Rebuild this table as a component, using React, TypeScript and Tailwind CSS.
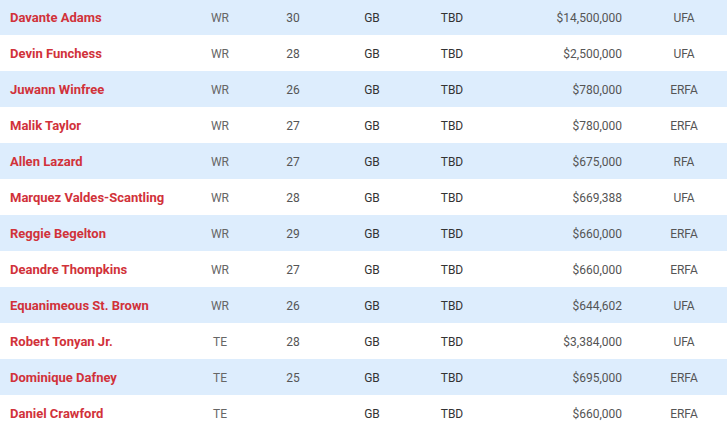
import React from "react";

const rows: [string, string, string, string, string, string, string][] = [
  ["Davante Adams", "WR", "30", "GB", "TBD", "$14,500,000", "UFA"],
  ["Devin Funchess", "WR", "28", "GB", "TBD", "$2,500,000", "UFA"],
  ["Juwann Winfree", "WR", "26", "GB", "TBD", "$780,000", "ERFA"],
  ["Malik Taylor", "WR", "27", "GB", "TBD", "$780,000", "ERFA"],
  ["Allen Lazard", "WR", "27", "GB", "TBD", "$675,000", "RFA"],
  ["Marquez Valdes-Scantling", "WR", "28", "GB", "TBD", "$669,388", "UFA"],
  ["Reggie Begelton", "WR", "29", "GB", "TBD", "$660,000", "ERFA"],
  ["Deandre Thompkins", "WR", "27", "GB", "TBD", "$660,000", "ERFA"],
  ["Equanimeous St. Brown", "WR", "26", "GB", "TBD", "$644,602", "UFA"],
  ["Robert Tonyan Jr.", "TE", "28", "GB", "TBD", "$3,384,000", "UFA"],
  ["Dominique Dafney", "TE", "25", "GB", "TBD", "$695,000", "ERFA"],
  ["Daniel Crawford", "TE", "", "GB", "TBD", "$660,000", "ERFA"],
];

export default function App() {
  return (
    <div
      className="w-[727px] h-[431px] overflow-hidden bg-white"
      style={{ fontFamily: "Roboto, 'Liberation Sans', sans-serif" }}
    >
      <div className="-mt-px">
        {rows.map((r, i) => (
          <div
            key={i}
            className={`grid grid-cols-[185px_70px_76px_82px_78px_150px_86px] h-[36px] pt-[2px] items-center text-[12px] ${
              i % 2 === 0 ? "bg-[#ddedfd]" : "bg-white"
            }`}
          >
            <div className="pl-[10px] text-[13px] font-bold text-[#d1323a] whitespace-nowrap">
              {r[0]}
            </div>
            <div className="text-center text-[#666]">{r[1]}</div>
            <div className="text-center text-[#555]">{r[2]}</div>
            <div className="text-center text-[#333]">{r[3]}</div>
            <div className="text-center text-[#333]">{r[4]}</div>
            <div className="text-right pr-[19px] text-[#555]">{r[5]}</div>
            <div className="text-center text-[#555]">{r[6]}</div>
          </div>
        ))}
      </div>
    </div>
  );
}
